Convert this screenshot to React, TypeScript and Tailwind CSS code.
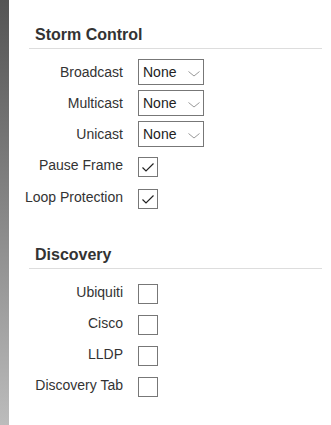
import React from "react";

const font = { fontFamily: '"Liberation Sans", Arial, sans-serif' };

function Select() {
  return (
    <div className="relative flex h-[26px] w-[66px] items-center border border-[#777] bg-white pl-[4px] text-[14px] leading-[16px] text-[#222]">
      <span>None</span>
      <svg className="absolute left-[49px] top-[11px]" width="12" height="7" viewBox="0 0 12 7">
        <polyline points="0.5,0.5 6,5 11.5,0.5" fill="none" stroke="#999" strokeWidth="1" />
      </svg>
    </div>
  );
}

function Check({ checked }: { checked?: boolean }) {
  return (
    <div className="relative h-[20px] w-[20px] border border-[#777] bg-white">
      {checked && (
        <svg className="absolute left-0 top-0" width="18" height="18" viewBox="0 0 18 18">
          <polyline points="3.5,9.5 7,13 14.5,5.5" fill="none" stroke="#222" strokeWidth="1.2" />
        </svg>
      )}
    </div>
  );
}

function Heading({ children, mt }: { children: React.ReactNode; mt: string }) {
  return (
    <div className={`${mt} border-b border-[#ddd] pb-[3px] pl-[6px] text-[16px] font-bold leading-[20px] text-[#333]`}>
      {children}
    </div>
  );
}

function Label({ children }: { children: React.ReactNode }) {
  return (
    <div className="flex w-[94px] justify-end whitespace-nowrap text-[14px] leading-[16px] text-[#333]">
      <span>{children}</span>
    </div>
  );
}

function SelectRow({ label, cls }: { label: string; cls: string }) {
  return (
    <div className={`flex items-center ${cls}`}>
      <Label>{label}</Label>
      <div className="ml-[15px]">
        <Select />
      </div>
    </div>
  );
}

function CheckRow({ label, checked, cls }: { label: string; checked?: boolean; cls: string }) {
  return (
    <div className={`flex items-start ${cls}`}>
      <Label>{label}</Label>
      <div className="ml-[15px]">
        <Check checked={checked} />
      </div>
    </div>
  );
}

export default function App() {
  return (
    <div className="flex h-[425px] w-[331px] overflow-hidden bg-white" style={font}>
      <div className="h-full w-[9px] shrink-0 bg-gradient-to-b from-[#555] to-[#bcbcbc]" />
      <div className="flex-1 pl-[20px] pr-[9px]">
        <Heading mt="mt-[25px]">Storm Control</Heading>
        <SelectRow label="Broadcast" cls="mt-[10px]" />
        <SelectRow label="Multicast" cls="mt-[5px]" />
        <SelectRow label="Unicast" cls="mt-[5px]" />
        <CheckRow label="Pause Frame" checked cls="mt-[10px]" />
        <CheckRow label="Loop Protection" checked cls="mt-[12px]" />
        <Heading mt="mt-[36px]">Discovery</Heading>
        <CheckRow label="Ubiquiti" cls="mt-[15px]" />
        <CheckRow label="Cisco" cls="mt-[11px]" />
        <CheckRow label="LLDP" cls="mt-[11px]" />
        <CheckRow label="Discovery Tab" cls="mt-[11px]" />
      </div>
    </div>
  );
}
